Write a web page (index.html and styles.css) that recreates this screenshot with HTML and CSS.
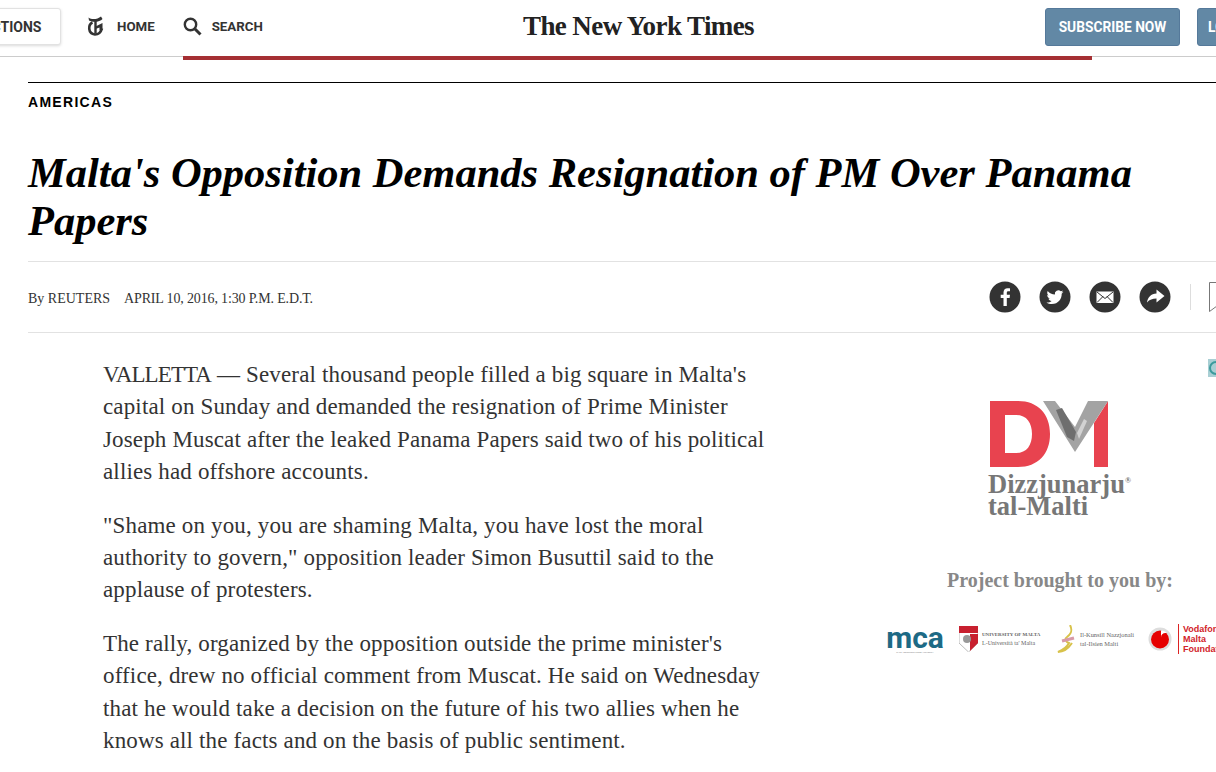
FILE: index.html
```html
<!DOCTYPE html>
<html lang="en">
<head>
    <meta charset="UTF-8">
    <meta name="viewport" content="width=device-width, initial-scale=1.0">
    <title>Malta's Opposition Demands Resignation of PM Over Panama Papers</title>
    <link rel="stylesheet" href="styles.css">
</head>
<body>
    <header class="masthead">
        <div class="nav">
            <button class="sections-btn">SECTIONS</button>
            <a class="nav-link home">
                <svg width="17" height="20" viewBox="0 0 17 20">
                    <path d="M1.500 1.500C4.500 4 10.500 3.500 14 .5l1.500 2.500C13 6 6 6.800 2 4.500z" fill="#333"/>
                    <path d="M5.500 6.500C1 8.500.5 17.500 8 18.500c3.500 0 6-2.500 7-6" fill="none" stroke="#333" stroke-width="2.600"/>
                    <path d="M8.500 4.500v13" fill="none" stroke="#333" stroke-width="2.400"/>
                    <path d="M8.500 10.500l7-3.500v6l-3 1.500v-3l-4 1.500z" fill="#333"/>
                </svg>
                HOME
            </a>
            <a class="nav-link search">
                <svg width="19" height="19" viewBox="0 0 19 19"><circle cx="7.500" cy="7.500" r="5.700" fill="none" stroke="#333" stroke-width="2.400"/><path d="M12 12l5.500 5.500" stroke="#333" stroke-width="3" fill="none"/></svg>
                SEARCH
            </a>
        </div>
        <div class="logo">The New York Times</div>
        <div class="account">
            <button class="account-btn">SUBSCRIBE NOW</button>
            <button class="account-btn">LOG IN</button>
        </div>
        <div class="progress"></div>
    </header>

    <main class="story">
        <div class="kicker">AMERICAS</div>
        <h1>Malta's Opposition Demands Resignation of PM Over Panama Papers</h1>

        <div class="meta">
            <div class="byline">
                <span>By REUTERS</span>
                <span class="dateline">APRIL 10, 2016, 1:30 P.M. E.D.T.</span>
            </div>
            <div class="share">
                <span class="share-icon">
                    <svg width="32" height="32" viewBox="0 0 32 32"><circle cx="16" cy="16" r="15.500" fill="#333"/><path d="M17.800 25v-8h2.800l.4-3.200h-3.200v-2c0-.9.3-1.500 1.600-1.500H21V7.400c-.3 0-1.300-.1-2.400-.1-2.400 0-4.100 1.500-4.100 4.200v2.300h-2.800V17h2.800v8z" fill="#fff"/></svg>
                </span>
                <span class="share-icon">
                    <svg width="32" height="32" viewBox="0 0 32 32"><circle cx="16" cy="16" r="15.500" fill="#333"/><path d="M24.500 10.800c-.6.300-1.300.5-2 .6.700-.4 1.300-1.100 1.500-1.900-.7.400-1.400.7-2.200.8a3.500 3.500 0 0 0-5.900 3.200c-2.900-.1-5.500-1.500-7.200-3.600-.9 1.600-.5 3.600 1.100 4.600-.6 0-1.100-.2-1.600-.4 0 1.700 1.200 3.100 2.800 3.400-.5.100-1 .2-1.600.1.400 1.400 1.700 2.400 3.200 2.400-1.500 1.200-3.400 1.700-5.100 1.500 1.500 1 3.400 1.500 5.300 1.500 6.500 0 10.100-5.400 9.900-10.300.7-.5 1.300-1.200 1.800-1.900z" fill="#fff"/></svg>
                </span>
                <span class="share-icon">
                    <svg width="32" height="32" viewBox="0 0 32 32"><circle cx="16" cy="16" r="15.500" fill="#333"/><rect x="7.500" y="10.500" width="17" height="11.500" fill="#fff"/><path d="M8 11l8 6.500 8-6.500M8 21.500l6-6M24 21.500l-6-6" stroke="#333" stroke-width="1" fill="none"/></svg>
                </span>
                <span class="share-icon">
                    <svg width="32" height="32" viewBox="0 0 32 32"><circle cx="16" cy="16" r="15.500" fill="#333"/><path d="M17.500 8.500l8 6.500-8 6.500v-4c-4 0-7 1-9.500 4 .6-5 4-9 9.500-9z" fill="#fff"/></svg>
                </span>
                <span class="share-divider"></span>
                <svg class="save-icon" width="12" height="32" viewBox="0 0 12 32"><path d="M.5 1.500H12M.5 1.500V30.500L12 22" stroke="#777" fill="none"/></svg>
            </div>
        </div>

        <div class="columns">
            <div class="story-body">
                <p><span class="dateline-city">VALLETTA</span> — Several thousand people filled a big square in Malta's capital on Sunday and demanded the resignation of Prime Minister Joseph Muscat after the leaked Panama Papers said two of his political allies had offshore accounts.</p>
                <p>"Shame on you, you are shaming Malta, you have lost the moral authority to govern," opposition leader Simon Busuttil said to the applause of protesters.</p>
                <p>The rally, organized by the opposition outside the prime minister's office, drew no official comment from Muscat. He said on Wednesday that he would take a decision on the future of his two allies when he knows all the facts and on the basis of public sentiment.</p>
            </div>

            <aside class="ad">
                <span class="ad-choice"><span class="ad-choice-ring"></span></span>
                <div class="dm-logo">
                    <svg width="119" height="66" viewBox="0 0 119 66">
                        <path d="M0 0h28c20 0 32 13 32 33S48 66 28 66H0zM15 14v38h11c11 0 16-8 16-19s-5-19-16-19z" fill="#e8434f"/>
                        <path d="M118 0v66h-14V22z" fill="#e8434f"/>
                        <path d="M53 0h12l20 26L98 0h20L85 51z" fill="#a3a3a3"/>
                        <path d="M66 9l6-2 14 24-2 9-7-4z" fill="#6e6e6e"/>
                        <path d="M87 32l7-14 3 2-8 18z" fill="#d2d2d2"/>
                    </svg>
                    <div class="dm-name">Dizzjunarju<sup>®</sup><br>tal-Malti</div>
                </div>
                <div class="ad-credit">Project brought to you by:</div>
                <div class="sponsors">
                    <div class="sponsor mca">
                        <span class="mca-mark">mca</span>
                        <span class="mca-sub">MALTA COMMUNICATIONS AUTHORITY</span>
                    </div>
                    <div class="sponsor uni">
                        <svg width="19" height="26" viewBox="0 0 19 26"><path d="M0 0h19v17l-9.500 9L0 17z" fill="#fff" stroke="#bbb"/><path d="M0 0h19v7H0zM11 8h8v9l-8 8z" fill="#c8202f"/><circle cx="8" cy="13" r="4" fill="#999"/></svg>
                        <div class="sponsor-text"><b class="uni-name">UNIVERSITY OF MALTA</b><br>L-Università ta' Malta</div>
                    </div>
                    <div class="sponsor kunsill">
                        <svg width="22" height="28" viewBox="0 0 22 28"><path d="M13 0c3 6 1 9-3 12-3 2-1 5 2 6-2 4-6 7-11 9 5 0 10-3 14-9" fill="none" stroke="#d8c24a" stroke-width="2"/><path d="M5 16l12-3" stroke="#d89aa8" stroke-width="3"/></svg>
                        <div class="sponsor-text kunsill-text">Il-Kunsill Nazzjonali<br>tal-Ilsien Malti</div>
                    </div>
                    <div class="sponsor vodafone">
                        <svg width="24" height="24" viewBox="0 0 24 24"><circle cx="12" cy="12" r="11.500" fill="#ddd"/><circle cx="12" cy="12.500" r="9" fill="#e60000"/><path d="M13 3.500c3 0 4.500 1 5.500 2.500-3-.5-5.500 1-5.500 4.500z" fill="#fff"/></svg>
                        <div class="vodafone-text">Vodafone<br>Malta<br>Foundation</div>
                    </div>
                </div>
            </aside>
        </div>
    </main>
</body>
</html>
```

FILE: styles.css
```css
body {
    margin: 0;
    width: 1216px;
    height: 772px;
    overflow: hidden;
    background: #fff;
    font-family: "Liberation Serif", serif;
    color: #333;
}

.masthead {
    position: relative;
    height: 56px;
    border-bottom: 1px solid #ccc;
    display: flex;
    align-items: flex-start;
}

.nav {
    display: flex;
    align-items: center;
    margin-left: -39px;
    padding-top: 8px;
    width: 500px;
    flex: none;
}

.sections-btn {
    width: 100px;
    height: 37px;
    flex: none;
    background: #fff;
    border: 1px solid #e2e2e2;
    border-radius: 3px;
    box-shadow: 0 1px 3px rgba(0, 0, 0, 0.15);
    font-family: Roboto, sans-serif;
    font-size: 14px;
    font-weight: bold;
    color: #333;
    padding: 0 0 0 13px;
    margin-right: 26px;
    text-align: left;
}

.nav-link {
    display: flex;
    align-items: center;
    font-family: Roboto, sans-serif;
    font-size: 13.300px;
    font-weight: bold;
    color: #333;
}

.home {
    gap: 13px;
    margin-right: 28px;
    margin-top: -1px;
}

.search {
    gap: 10px;
}

.logo {
    position: absolute;
    left: 523px;
    top: 11px;
    font-family: "Liberation Serif", serif;
    font-size: 27px;
    font-weight: bold;
    letter-spacing: -0.6px;
    color: #222;
    white-space: nowrap;
}

.account {
    position: absolute;
    left: 1045px;
    top: 8px;
    display: flex;
    gap: 17px;
}

.account-btn {
    width: 135px;
    height: 38px;
    flex: none;
    background: #6288a5;
    border: 1px solid #55799a;
    border-radius: 3px;
    color: #fff;
    font-family: Roboto, sans-serif;
    font-size: 13.750px;
    font-weight: bold;
    padding: 0;
    white-space: nowrap;
}

.account-btn + .account-btn {
    text-align: left;
    padding-left: 10px;
}

.progress {
    position: absolute;
    left: 183px;
    top: 56px;
    width: 909px;
    height: 4px;
    background: #a52f33;
}

.story {
    margin-left: 28px;
    padding-top: 25px;
}

.kicker {
    border-top: 1px solid #000;
    padding-top: 11px;
    font-family: "Liberation Sans", sans-serif;
    font-size: 14px;
    font-weight: bold;
    letter-spacing: 1.300px;
    line-height: 16px;
    color: #000;
}

h1 {
    margin: 39px 0 0;
    font-family: "Liberation Serif", serif;
    font-size: 42.500px;
    font-style: italic;
    font-weight: bold;
    line-height: 48px;
    color: #000;
    width: 1150px;
}

.meta {
    display: flex;
    align-items: center;
    justify-content: space-between;
    height: 70px;
    margin-top: 16px;
    border-top: 1px solid #e2e2e2;
    border-bottom: 1px solid #e2e2e2;
}

.byline {
    display: flex;
    gap: 14px;
    padding-top: 4px;
    font-size: 14px;
    color: #333;
}

.dateline {
    letter-spacing: -0.150px;
}

.share {
    display: flex;
    align-items: center;
    gap: 18px;
    margin-right: -5px;
}

.share-icon {
    display: block;
    height: 32px;
}

.share-divider {
    width: 1px;
    height: 26px;
    background: #ddd;
    margin-left: 1px;
}

.columns {
    display: flex;
}

.story-body {
    flex: none;
    width: 664px;
    margin-left: 75px;
    margin-right: -4px;
    padding-top: 26px;
    font-family: "Liberation Serif", serif;
    font-size: 23px;
    letter-spacing: 0.150px;
    line-height: 32.400px;
    color: #333;
}

.story-body p {
    margin: 0 0 21px;
}

.dateline-city {
    letter-spacing: -0.900px;
}

.ad {
    position: relative;
    flex: 1;
    min-width: 0;
    font-family: "Liberation Serif", serif;
}

.ad-choice {
    position: absolute;
    right: 0;
    top: 26px;
    width: 8px;
    height: 18px;
    overflow: hidden;
    background: #a9cfd4;
}

.ad-choice-ring {
    display: block;
    width: 14px;
    height: 14px;
    margin: 2px 0 0 1px;
    box-sizing: border-box;
    border: 2px solid #3c9a9c;
    border-radius: 50%;
}

.dm-logo {
    margin: 68px 0 0 227px;
}

.dm-logo svg {
    display: block;
}

.dm-name {
    margin: 6px 0 0 -2px;
    font-size: 26.500px;
    font-weight: bold;
    line-height: 22px;
    color: #777;
    white-space: nowrap;
}

.dm-name sup {
    font-size: 8px;
    line-height: 0;
}

.ad-credit {
    margin: 52px 0 0 184px;
    font-size: 20px;
    font-weight: bold;
    color: #888;
    white-space: nowrap;
}

.sponsors {
    display: flex;
    align-items: center;
    margin: 32px 0 0 125px;
    width: 340px;
}

.sponsor {
    display: flex;
    align-items: center;
    flex: none;
    gap: 4px;
}

.mca {
    flex-direction: column;
    gap: 0;
    width: 54px;
    margin-right: 17px;
}

.mca-mark {
    font-family: Roboto, sans-serif;
    font-size: 30px;
    font-weight: bold;
    line-height: 26px;
    color: #1d6a85;
}

.mca-sub {
    font-family: "Liberation Sans", sans-serif;
    font-size: 2px;
    line-height: 3px;
    color: #777;
    white-space: nowrap;
}

.uni {
    width: 84px;
    margin-right: 14px;
}

.kunsill {
    width: 78px;
    margin-right: 13px;
    gap: 1px;
}

.sponsor-text {
    font-size: 6px;
    line-height: 9px;
    color: #666;
    white-space: nowrap;
}

.uni-name {
    font-size: 5px;
}

.kunsill-text {
    font-size: 6.400px;
}

.vodafone {
    gap: 6px;
}

.vodafone-text {
    border-left: 1px solid #d22;
    padding-left: 4px;
    font-family: "Liberation Sans", sans-serif;
    font-size: 9px;
    font-weight: bold;
    line-height: 10px;
    color: #d2232a;
    white-space: nowrap;
}
```
